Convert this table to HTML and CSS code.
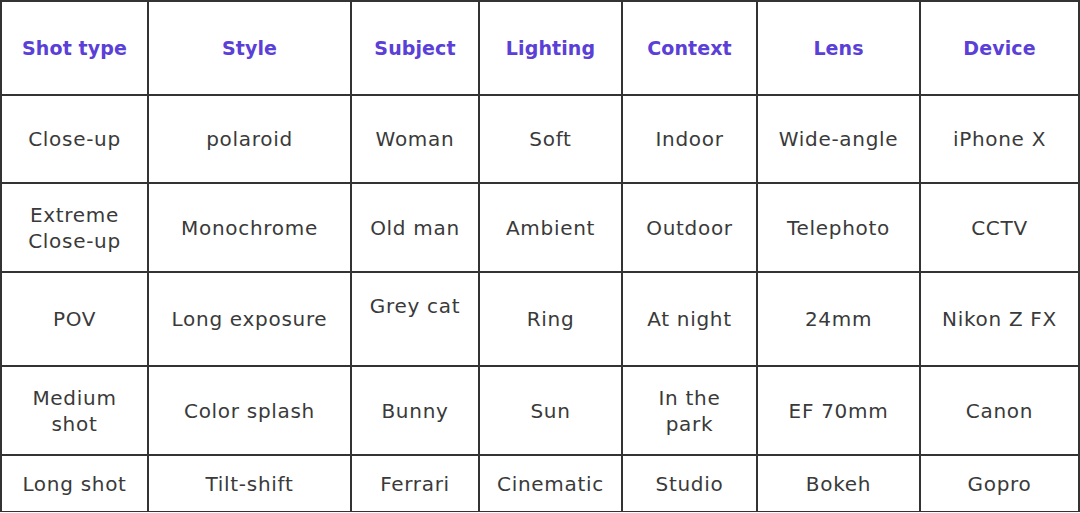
FILE: index.html
```html
<!DOCTYPE html>
<html>
<head>
<meta charset="utf-8">
<link rel="stylesheet" href="styles.css">
</head>
<body>
<div class="table">
  <div class="cell head">Shot type</div>
  <div class="cell head">Style</div>
  <div class="cell head">Subject</div>
  <div class="cell head">Lighting</div>
  <div class="cell head">Context</div>
  <div class="cell head">Lens</div>
  <div class="cell head">Device</div>

  <div class="cell">Close-up</div>
  <div class="cell">polaroid</div>
  <div class="cell">Woman</div>
  <div class="cell">Soft</div>
  <div class="cell">Indoor</div>
  <div class="cell">Wide-angle</div>
  <div class="cell">iPhone X</div>

  <div class="cell">Extreme<br>Close-up</div>
  <div class="cell">Monochrome</div>
  <div class="cell">Old man</div>
  <div class="cell">Ambient</div>
  <div class="cell">Outdoor</div>
  <div class="cell">Telephoto</div>
  <div class="cell">CCTV</div>

  <div class="cell">POV</div>
  <div class="cell">Long exposure</div>
  <div class="cell">Grey cat<br>&nbsp;</div>
  <div class="cell">Ring</div>
  <div class="cell">At night</div>
  <div class="cell">24mm</div>
  <div class="cell">Nikon Z FX</div>

  <div class="cell">Medium<br>shot</div>
  <div class="cell">Color splash</div>
  <div class="cell">Bunny</div>
  <div class="cell">Sun</div>
  <div class="cell">In the<br>park</div>
  <div class="cell">EF 70mm</div>
  <div class="cell">Canon</div>

  <div class="cell">Long shot</div>
  <div class="cell">Tilt-shift</div>
  <div class="cell">Ferrari</div>
  <div class="cell">Cinematic</div>
  <div class="cell">Studio</div>
  <div class="cell">Bokeh</div>
  <div class="cell">Gopro</div>
</div>
</body>
</html>
```

FILE: styles.css
```css
html, body {
  margin: 0;
  padding: 0;
  background: #ffffff;
}

.table {
  display: grid;
  grid-template-columns: 145px 201px 126px 141px 133px 161px 157px;
  grid-template-rows: 92px 86px 87px 92px 87px 55px;
  gap: 2px;
  padding: 2px;
  background: #333333;
  width: 1080px;
  height: 512px;
  box-sizing: border-box;
}

.cell {
  background: #ffffff;
  display: flex;
  align-items: center;
  justify-content: center;
  text-align: center;
  font-family: "DejaVu Sans", sans-serif;
  font-size: 20px;
  letter-spacing: 0.7px;
  line-height: 26px;
  color: #3a3a3a;
}

.head {
  color: #5a40d6;
  font-weight: bold;
  font-size: 19px;
  letter-spacing: 0.1px;
}
```
